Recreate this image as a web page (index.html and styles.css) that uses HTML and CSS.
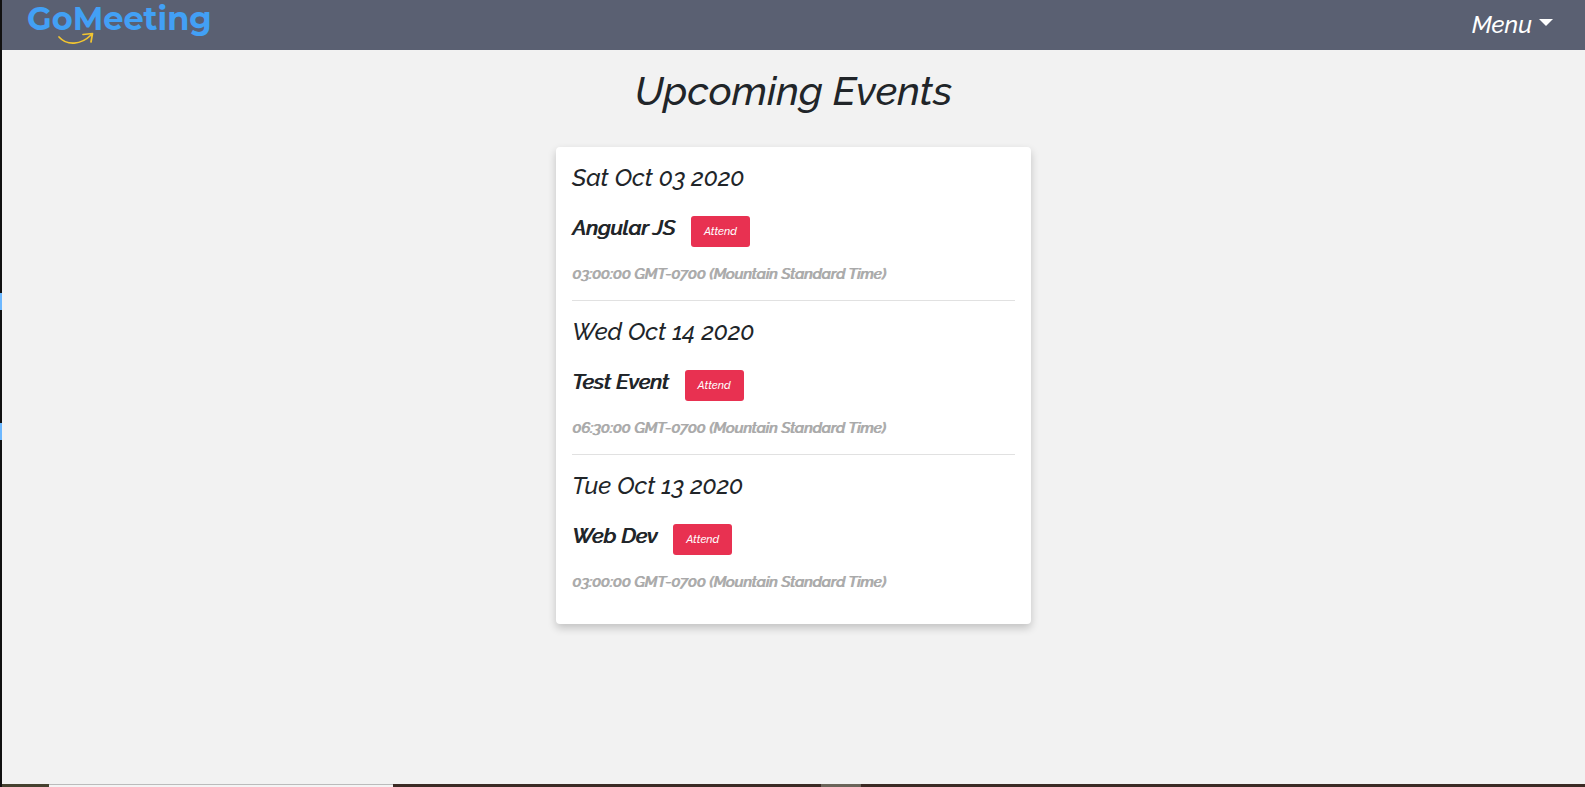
FILE: index.html
```html
<!DOCTYPE html>
<html lang="en">
<head>
<meta charset="utf-8">
<title>GoMeeting</title>
<link rel="stylesheet" href="styles.css">
</head>
<body>
<div class="edge" aria-hidden="true"><span class="mark"></span><span class="mark"></span></div>
<div class="page">
  <header class="navbar">
    <a class="brand" href="#">GoMeeting
      <svg class="swoosh" viewBox="0 0 38 14" aria-hidden="true"><path d="M2 5C10 14 24 13 34 3M26 2.500L35.500 1.500L34 10" fill="none" stroke="#f2c530" stroke-width="1.700" stroke-linecap="round" stroke-linejoin="round"/></svg>
    </a>
    <button class="menu" type="button">Menu<span class="caret"></span></button>
  </header>
  <main class="content">
    <h1 class="heading">Upcoming Events</h1>
    <div class="card">
      <section class="event">
        <h2 class="date">Sat Oct 03 2020</h2>
        <div class="row"><h3 class="name">Angular JS</h3><button class="attend" type="button">Attend</button></div>
        <p class="time">03:00:00 GMT-0700 (Mountain Standard Time)</p>
      </section>
      <section class="event">
        <h2 class="date">Wed Oct 14 2020</h2>
        <div class="row"><h3 class="name">Test Event</h3><button class="attend" type="button">Attend</button></div>
        <p class="time">06:30:00 GMT-0700 (Mountain Standard Time)</p>
      </section>
      <section class="event">
        <h2 class="date">Tue Oct 13 2020</h2>
        <div class="row"><h3 class="name">Web Dev</h3><button class="attend" type="button">Attend</button></div>
        <p class="time">03:00:00 GMT-0700 (Mountain Standard Time)</p>
      </section>
    </div>
  </main>
  <footer class="strip" aria-hidden="true"><span class="strip-start"></span><span class="strip-field"></span><span class="strip-mid"></span><span class="strip-tab"></span></footer>
</div>
</body>
</html>
```
FILE: styles.css
```css
* { box-sizing: border-box; }
body {
  margin: 0;
  display: flex;
  min-height: 100vh;
  background: #f2f2f2;
  color: #212529;
  font-family: Raleway, Lato, sans-serif;
  font-style: italic;
  font-weight: 500;
  font-variant-numeric: oldstyle-nums;
}
h1, h2, h3, p { margin: 0; font-weight: 500; }
button { border: 0; font: inherit; color: #fff; cursor: pointer; }
.edge {
  width: 2px;
  background: #111;
  padding-top: 293px;
  display: flex;
  flex-direction: column;
  gap: 113px;
}
.mark { height: 17px; background: #6db8ff; }
.page { flex: 1; display: flex; flex-direction: column; }
.navbar {
  height: 50px;
  padding: 0 32px 0 25px;
  background: #5a6072;
  display: flex;
  justify-content: space-between;
  align-items: center;
}
.brand {
  position: relative;
  align-self: flex-start;
  color: #42a0f5;
  font: 700 32px/38px Montserrat, Inter, sans-serif;
  text-decoration: none;
}
.swoosh { position: absolute; left: 30px; top: 32px; width: 38px; height: 14px; }
.menu {
  display: flex;
  align-items: center;
  gap: 7px;
  padding: 0;
  background: none;
  font-size: 24px;
  line-height: 30px;
}
.caret {
  border: 7px solid transparent;
  border-top-color: #fff;
  border-bottom: 0;
  margin-bottom: 6px;
}
.content {
  flex: 1;
  display: flex;
  flex-direction: column;
  align-items: center;
  padding: 17px 0 32px;
}
.heading { font-size: 40px; line-height: 48px; margin-bottom: 32px; }
.card {
  width: 30%;
  padding: 16px;
  background: #fff;
  border-radius: 4px;
  box-shadow: 0 4px 8px rgba(0, 0, 0, 0.2);
}
.event + .event { border-top: 1px solid #e1e1e1; padding-top: 16px; }
.event { padding-bottom: 14px; }
.date { font-size: 24px; line-height: 29px; margin-bottom: 24px; }
.row { display: flex; gap: 16px; height: 31px; }
.name { font-size: 21px; line-height: 24px; text-shadow: 1px 0 currentColor; }
.attend {
  padding: 0 13px;
  border-radius: 3px;
  background: #e83151;
  font-size: 11px;
  line-height: 31px;
}
.time {
  margin-top: 15px;
  color: #a9a9a9;
  font-size: 15px;
  line-height: 24px;
  text-shadow: 1px 0 currentColor;
}
.strip { height: 3px; display: flex; background: #3b2a24; }
.strip-start { width: 3%; background: #45412f; }
.strip-field { flex: 0 0 344px; background: #f4f4f4; border-top: 1px solid #bbb; }
.strip-mid { width: 27%; }
.strip-tab { width: 40px; background: #6a6459; }
```
